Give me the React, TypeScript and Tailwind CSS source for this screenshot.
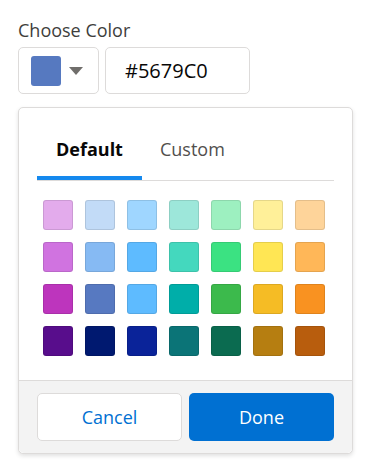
import { useState } from "react";

const swatches = [
  ["#e3abec", "#c2dbf7", "#9fd6ff", "#9de7da", "#9df0c0", "#fff099", "#fed49a"],
  ["#d073e0", "#86baf3", "#5ebbff", "#44d8be", "#3be282", "#ffe654", "#ffb758"],
  ["#bd35bd", "#5779c1", "#5ebbff", "#00aea9", "#3cba4c", "#f5bc25", "#f99221"],
  ["#580d8c", "#001970", "#0a2399", "#0b7477", "#0b6b50", "#b67e11", "#b85d0d"],
];

const App = () => {
  const [tab, setTab] = useState("default");
  const [color, setColor] = useState("#5679C0");

  return (
    <div className="w-[370px] h-[475px] bg-white px-[18px] pt-[19px] font-['Open_Sans',sans-serif]">
      {/* Label */}
      <div className="text-[18px] leading-[22px] text-[#3e3e3c]">Choose Color</div>

      {/* Trigger + hex input */}
      <div className="mt-[6px] flex gap-[6px]">
        <button
          type="button"
          className="flex h-[47px] w-[81px] items-center rounded-[5px] border border-[#dddbda] pl-[12px]"
        >
          <span className="h-[30px] w-[30px] rounded-[3px]" style={{ backgroundColor: color }} />
          <svg width="14" height="8" viewBox="0 0 14 8" className="ml-[8px]">
            <path d="M0 0 L14 0 L7 8 Z" fill="#706e6b" />
          </svg>
        </button>
        <div className="flex h-[47px] w-[145px] items-center rounded-[5px] border border-[#dddbda] pl-[19px] text-[20px] text-[#080707]">
          {color}
        </div>
      </div>

      {/* Popover */}
      <div className="mt-[13px] w-[335px] rounded-[5px] border border-[#dddbda] bg-white shadow-[0_2px_4px_rgba(0,0,0,0.12)]">
        <div className="px-[18px] pt-[30px]">
          <div className="flex border-b border-[#dddbda]">
            <button
              type="button"
              onClick={() => setTab("default")}
              className={`border-b-[4px] px-[19px] pb-[16px] text-[18px] leading-[22px] ${
                tab === "default"
                  ? "border-[#1589ee] font-bold text-[#080707]"
                  : "border-transparent text-[#3e3e3c]"
              }`}
            >
              Default
            </button>
            <button
              type="button"
              onClick={() => setTab("custom")}
              className={`border-b-[4px] px-[18px] pb-[16px] text-[18px] leading-[22px] ${
                tab === "custom"
                  ? "border-[#1589ee] font-bold text-[#080707]"
                  : "border-transparent text-[#514f4d]"
              }`}
            >
              Custom
            </button>
          </div>

          {/* Swatch grid */}
          <div className="grid grid-cols-7 gap-[12px] px-[6px] pt-[19px] pb-[24px] w-fit">
            {swatches.flat().map((c, i) => (
              <button
                key={i}
                type="button"
                onClick={() => setColor(c.toUpperCase())}
                className="h-[30px] w-[30px] rounded-[3px] border border-black/10"
                style={{ backgroundColor: c }}
              />
            ))}
          </div>
        </div>

        {/* Footer */}
        <div className="flex gap-[7px] rounded-b-[5px] border-t border-[#dddbda] bg-[#f3f3f3] px-[18px] py-[12px]">
          <button
            type="button"
            className="h-[48px] w-[145px] rounded-[5px] border border-[#dddbda] bg-white text-[18px] text-[#0070d2]"
          >
            Cancel
          </button>
          <button
            type="button"
            className="h-[48px] w-[145px] rounded-[5px] bg-[#0070d2] text-[18px] text-white"
          >
            Done
          </button>
        </div>
      </div>
    </div>
  );
};

export default App;
